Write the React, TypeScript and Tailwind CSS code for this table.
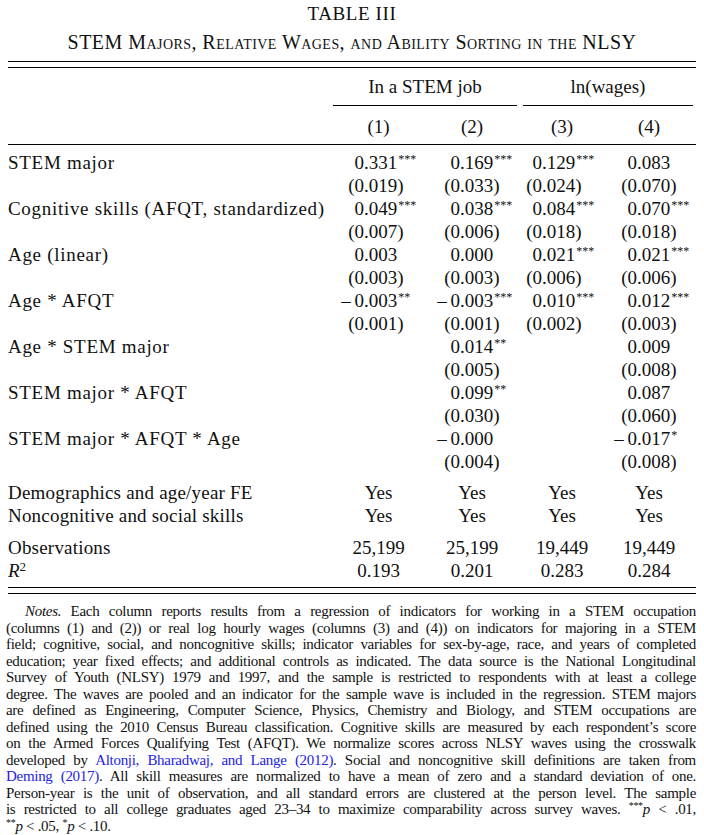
import React from 'react';

type Cell = { v: string; s?: string } | null;

interface Row {
  label: string;
  coef: Cell[];
  se: (string | null)[];
}

const rows: Row[] = [
  {
    label: 'STEM major',
    coef: [{ v: '0.331', s: '***' }, { v: '0.169', s: '***' }, { v: '0.129', s: '***' }, { v: '0.083' }],
    se: ['0.019', '0.033', '0.024', '0.070'],
  },
  {
    label: 'Cognitive skills (AFQT, standardized)',
    coef: [{ v: '0.049', s: '***' }, { v: '0.038', s: '***' }, { v: '0.084', s: '***' }, { v: '0.070', s: '***' }],
    se: ['0.007', '0.006', '0.018', '0.018'],
  },
  {
    label: 'Age (linear)',
    coef: [{ v: '0.003' }, { v: '0.000' }, { v: '0.021', s: '***' }, { v: '0.021', s: '***' }],
    se: ['0.003', '0.003', '0.006', '0.006'],
  },
  {
    label: 'Age * AFQT',
    coef: [{ v: '-0.003', s: '**' }, { v: '-0.003', s: '***' }, { v: '0.010', s: '***' }, { v: '0.012', s: '***' }],
    se: ['0.001', '0.001', '0.002', '0.003'],
  },
  {
    label: 'Age * STEM major',
    coef: [null, { v: '0.014', s: '**' }, null, { v: '0.009' }],
    se: [null, '0.005', null, '0.008'],
  },
  {
    label: 'STEM major * AFQT',
    coef: [null, { v: '0.099', s: '**' }, null, { v: '0.087' }],
    se: [null, '0.030', null, '0.060'],
  },
  {
    label: 'STEM major * AFQT * Age',
    coef: [null, { v: '-0.000' }, null, { v: '-0.017', s: '*' }],
    se: [null, '0.004', null, '0.008'],
  },
];

// width of the part left of the decimal point, per column
const preWidth = ['w-[31px]', 'w-[36px]', 'w-[22px]', 'w-[33px]'];

const grid = 'grid grid-cols-[325px_91px_96px_84px_90px]';

const Num: React.FC<{ col: number; pre: string; post: string; stars?: string }> = ({ col, pre, post, stars }) => (
  <div className="flex">
    <span className={`${preWidth[col]} shrink-0 text-right whitespace-nowrap`}>{pre}</span>
    <span className="whitespace-nowrap">
      {post}
      {stars && <sup className="text-[12px] ml-[1px]">{stars}</sup>}
    </span>
  </div>
);

const splitCoef = (v: string) => {
  const neg = v.startsWith('-');
  const [a, b] = v.replace('-', '').split('.');
  return { pre: neg ? `–\u2009${a}` : a, post: `.${b}` };
};

const notes: React.ReactNode[] = [
  <>
    <em>Notes.</em> Each column reports results from a regression of indicators for working in a STEM occupation
  </>,
  '(columns (1) and (2)) or real log hourly wages (columns (3) and (4)) on indicators for majoring in a STEM',
  'field; cognitive, social, and noncognitive skills; indicator variables for sex-by-age, race, and years of completed',
  'education; year fixed effects; and additional controls as indicated. The data source is the National Longitudinal',
  'Survey of Youth (NLSY) 1979 and 1997, and the sample is restricted to respondents with at least a college',
  'degree. The waves are pooled and an indicator for the sample wave is included in the regression. STEM majors',
  'are defined as Engineering, Computer Science, Physics, Chemistry and Biology, and STEM occupations are',
  'defined using the 2010 Census Bureau classification. Cognitive skills are measured by each respondent’s score',
  'on the Armed Forces Qualifying Test (AFQT). We normalize scores across NLSY waves using the crosswalk',
  <>
    developed by <span className="text-[#2323e8]">Altonji, Bharadwaj, and Lange (2012)</span>. Social and noncognitive skill definitions are taken from
  </>,
  <>
    <span className="text-[#2323e8]">Deming (2017)</span>. All skill measures are normalized to have a mean of zero and a standard deviation of one.
  </>,
  'Person-year is the unit of observation, and all standard errors are clustered at the person level. The sample',
  <>
    is restricted to all college graduates aged 23–34 to maximize comparability across survey waves. <sup className="text-[10px]">***</sup>
    <em>p</em> &lt; .01,
  </>,
  <>
    <sup className="text-[10px]">**</sup>
    <em>p</em> &lt; .05, <sup className="text-[10px]">*</sup>
    <em>p</em> &lt; .10.
  </>,
];

export default function App() {
  return (
    <div className="w-[704px] h-[835px] bg-white text-[#111] font-['Liberation_Serif',serif] overflow-hidden">
      {/* Title */}
      <div className="pt-[3px] text-center text-[19px] leading-[22px] tracking-[0.6px]">TABLE III</div>
      <div className="mt-[6px] text-center text-[20px] leading-[22px] tracking-[0.45px] [font-variant:small-caps]">
        STEM Majors, Relative Wages, and Ability Sorting in the NLSY
      </div>

      <div className="mx-2 text-[19px]">
        <div className="mt-[8px] h-px bg-black" />
        <div className="mt-[5px] h-px bg-black" />

        {/* Column headers */}
        <div className={`${grid} pt-[8px]`}>
          <div />
          <div className="col-span-2 mr-[3px] pb-[7px] border-b border-black text-center leading-[22px]">In a STEM job</div>
          <div className="col-span-2 ml-[3px] mr-[1px] pb-[7px] border-b border-black text-center leading-[22px]">
            ln(wages)
          </div>
        </div>
        <div className={`${grid} mt-[10px] leading-[22px]`}>
          <div />
          {['(1)', '(2)', '(3)', '(4)'].map((h) => (
            <div key={h} className="text-center">
              {h}
            </div>
          ))}
        </div>
        <div className="mt-[6px] h-px bg-black" />

        {/* Coefficients */}
        <div className="pt-[6px] leading-[23px]">
          {rows.map((r) => (
            <React.Fragment key={r.label}>
              <div className={grid}>
                <div className="tracking-[0.7px]">{r.label}</div>
                {r.coef.map((c, i) => {
                  if (!c) return <div key={i} />;
                  const { pre, post } = splitCoef(c.v);
                  return <Num key={i} col={i} pre={pre} post={post} stars={c.s} />;
                })}
              </div>
              <div className={grid}>
                <div />
                {r.se.map((s, i) => {
                  if (!s) return <div key={i} />;
                  const [a, b] = s.split('.');
                  return <Num key={i} col={i} pre={`(${a}`} post={`.${b})`} />;
                })}
              </div>
            </React.Fragment>
          ))}
        </div>

        <div className="mt-[8px] leading-[23px]">
          {['Demographics and age/year FE', 'Noncognitive and social skills'].map((l) => (
            <div key={l} className={grid}>
              <div className="tracking-[0.2px]">{l}</div>
              {[0, 1, 2, 3].map((i) => (
                <div key={i} className="text-center">
                  Yes
                </div>
              ))}
            </div>
          ))}
        </div>

        <div className="mt-[9px] leading-[23px]">
          <div className={grid}>
            <div className="tracking-[0.2px]">Observations</div>
            {['25,199', '25,199', '19,449', '19,449'].map((v, i) => (
              <div key={i} className="text-center">
                {v}
              </div>
            ))}
          </div>
          <div className={grid}>
            <div>
              <em>R</em>
              <sup className="text-[13px]">2</sup>
            </div>
            {['0.193', '0.201', '0.283', '0.284'].map((v, i) => (
              <div key={i} className="text-center">
                {v}
              </div>
            ))}
          </div>
        </div>

        <div className="mt-[5px] h-px bg-black" />
        <div className="mt-[5px] h-px bg-black" />
      </div>

      {/* Notes */}
      <div className="mt-[9px] ml-[6px] mr-[8px] text-[15px] leading-[16.5px] tracking-[-0.3px]">
        {notes.map((n, i) => (
          <div
            key={i}
            className={i === notes.length - 1 ? 'text-left' : i === 0 ? 'pl-[19px] text-justify [text-align-last:justify]' : 'text-justify [text-align-last:justify]'}
          >
            {n}
          </div>
        ))}
      </div>
    </div>
  );
}
